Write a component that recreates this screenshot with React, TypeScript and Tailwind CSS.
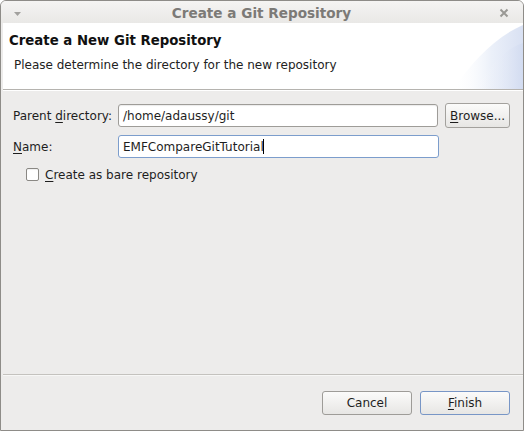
import React from "react";

const font = { fontFamily: '"DejaVu Sans", "Liberation Sans", sans-serif' };

function U({ children }: { children: React.ReactNode }) {
  return <span className="underline underline-offset-2 decoration-1">{children}</span>;
}

export default function App() {
  return (
    <div className="w-[525px] h-[432px] bg-white" style={font}>
      <div className="w-[524px] h-[431px] flex flex-col border border-[#8e8c88] rounded-t-[6px] bg-[#edeceb] overflow-hidden text-[12px] text-[#1e1e1e]">
        {/* Title bar */}
        <div className="h-[22px] shrink-0 flex items-center px-[12px] bg-gradient-to-b from-[#f5f4f3] to-[#e9e8e6]">
          <svg width="9" height="6" viewBox="0 0 9 6" className="mt-[3px]">
            <path d="M1 1 L8 1 L4.5 5 Z" fill="#a2a19e" />
          </svg>
          <div className="flex-1 text-center font-bold text-[13.6px] leading-[16px] text-[#7c7a77] pl-[2px] mt-[2px]">Create a Git Repository</div>
          <svg width="10" height="10" viewBox="0 0 10 10" className="mr-[2px] mt-[2px]">
            <path d="M1.5 1.5 L8.5 8.5 M8.5 1.5 L1.5 8.5" stroke="#9a9995" strokeWidth="2" />
          </svg>
        </div>

        {/* Body */}
        <div className="flex-1 flex flex-col pl-[2px] pr-[0px]">
          {/* Header banner */}
          <div className="h-[66px] shrink-0 bg-white flex justify-between">
            <div className="pl-[6px] pt-[10px]">
              <div className="font-bold text-[13.3px] text-[#111] leading-[16px]">Create a New Git Repository</div>
              <div className="pl-[5px] mt-[8px] leading-[16px] text-[#222]">Please determine the directory for the new repository</div>
            </div>
            <svg width="72" height="66" viewBox="0 0 72 66" className="shrink-0">
              <defs>
                <linearGradient id="g1" x1="0" y1="0" x2="1" y2="0">
                  <stop offset="0" stopColor="#ffffff" stopOpacity="0" />
                  <stop offset="0.55" stopColor="#ebf0f9" />
                  <stop offset="1" stopColor="#d9e1f3" />
                </linearGradient>
                <linearGradient id="g2" x1="0" y1="0" x2="1" y2="0">
                  <stop offset="0" stopColor="#ffffff" stopOpacity="0" />
                  <stop offset="1" stopColor="#d0daf0" />
                </linearGradient>
              </defs>
              <path d="M2 66 C 22 38, 44 14, 72 2 L72 66 Z" fill="url(#g1)" />
              <path d="M24 66 C 36 48, 52 26, 72 20 L72 66 Z" fill="url(#g2)" opacity="0.75" />
            </svg>
          </div>
          <div className="h-px bg-[#b5b3af]" />
          <div className="h-px bg-white" />

          {/* Form */}
          <div className="flex-1 flex flex-col pl-[10px] pr-[13px] pt-[12px]">
            <div className="flex items-center h-[25px]">
              <div className="w-[105px] shrink-0">
                Parent <U>d</U>irectory:
              </div>
              <div className="w-[321px] h-[23px] bg-white border border-[#9e9c98] rounded-[3px] flex items-center px-[4px] shadow-[inset_0_1px_1px_rgba(0,0,0,0.08)]">
                /home/adaussy/git
              </div>
              <div className="ml-[7px] w-[65px] h-[25px] border border-[#a3a19d] rounded-[3px] bg-gradient-to-b from-[#fbfbfa] to-[#e7e6e4] flex items-center justify-center">
                <span><U>B</U>rowse...</span>
              </div>
            </div>
            <div className="flex items-center h-[23px] mt-[7px]">
              <div className="w-[105px] shrink-0">
                <U>N</U>ame:
              </div>
              <div className="w-[321px] h-[23px] bg-white border border-[#7c9dcc] rounded-[3px] flex items-center px-[4px]">
                <span>EMFCompareGitTutorial</span>
                <span className="inline-block w-px h-[15px] bg-black -ml-[1px]" />
              </div>
            </div>
            <div className="flex items-center mt-[9px] pl-[13px] h-[15px]">
              <div className="w-[13px] h-[13px] border border-[#8a8884] rounded-[2px] bg-white shadow-[inset_0_1px_1px_rgba(0,0,0,0.06)]" />
              <div className="ml-[6px]">
                <U>C</U>reate as bare repository
              </div>
            </div>
          </div>

          {/* Bottom separator */}
          <div className="h-px bg-[#c4c2be]" />
          <div className="h-px bg-[#f7f7f6]" />

          {/* Buttons */}
          <div className="h-[54px] shrink-0 flex justify-end items-start pt-[15px] pr-[13px]">
            <div className="w-[90px] h-[24px] border border-[#9e9c98] rounded-[3px] bg-gradient-to-b from-[#fbfbfa] to-[#e7e6e4] flex items-center justify-center">
              Cancel
            </div>
            <div className="ml-[8px] w-[90px] h-[24px] border border-[#7896c6] rounded-[3px] bg-gradient-to-b from-[#fbfbfa] to-[#e7e6e4] flex items-center justify-center">
              <span><U>F</U>inish</span>
            </div>
          </div>
        </div>
      </div>
    </div>
  );
}
